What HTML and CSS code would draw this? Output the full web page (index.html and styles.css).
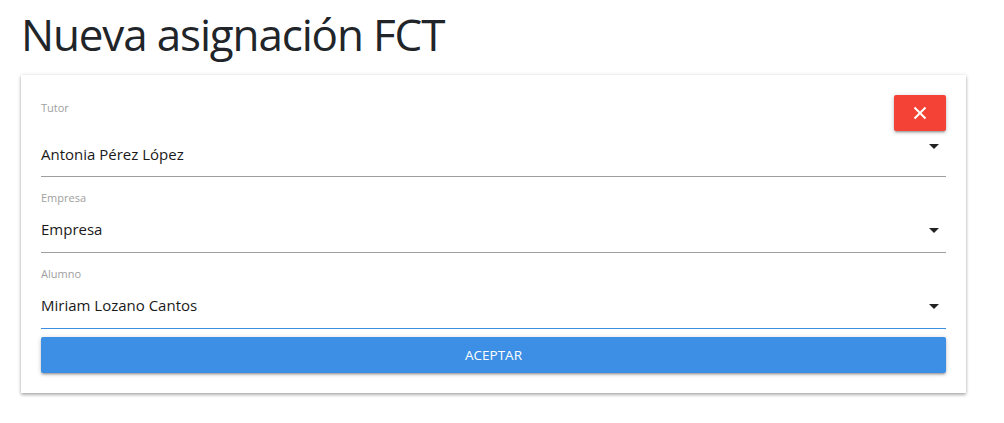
FILE: index.html
```html
<!DOCTYPE html>
<html lang="es">
<head>
<meta charset="utf-8">
<title>Nueva asignación FCT</title>
<link rel="stylesheet" href="styles.css">
</head>
<body>
<main class="page">
  <h1 class="title">Nueva asignación FCT</h1>
  <section class="card">
    <div class="field field-first">
      <div class="field-top">
        <label class="field-label">Tutor</label>
        <button class="btn-close" type="button" aria-label="Cerrar">
          <svg width="14" height="14" viewBox="0 0 14 14"><path d="M1.5 1.5 L12.5 12.5 M12.5 1.5 L1.5 12.5" stroke="#fff" stroke-width="2" fill="none"/></svg>
        </button>
      </div>
      <div class="field-value">
        <span class="value-text">Antonia Pérez López</span>
        <span class="caret caret-high"></span>
      </div>
    </div>
    <div class="field">
      <label class="field-label">Empresa</label>
      <div class="field-value">
        <span class="value-text">Empresa</span>
        <span class="caret"></span>
      </div>
    </div>
    <div class="field field-active">
      <label class="field-label">Alumno</label>
      <div class="field-value">
        <span class="value-text">Miriam Lozano Cantos</span>
        <span class="caret"></span>
      </div>
    </div>
    <button class="btn-accept" type="button">ACEPTAR</button>
  </section>
</main>
</body>
</html>
```
FILE: styles.css
```css
* { box-sizing: border-box; }
html, body { margin: 0; padding: 0; background: #fff; }
body {
  font-family: "Open Sans", "Noto Sans", "DejaVu Sans", sans-serif;
  color: #212121;
}
.page {
  padding: 8px 38px 30px 21px;
}
.title {
  margin: 0 0 14px 0;
  font-size: 44px;
  line-height: 53px;
  font-weight: 400;
  color: #212529;
  letter-spacing: -1.15px;
}
.card {
  background: #fff;
  padding: 20px;
  box-shadow: 0 2px 3px 0 rgba(0,0,0,0.28), 0 0 4px 0 rgba(0,0,0,0.12);
  display: flex;
  flex-direction: column;
}
.field {
  padding: 13px 0 11px 0;
  border-bottom: 1px solid #9e9e9e;
}
.field-first {
  padding: 0 0 10px 0;
}
.field-active {
  border-bottom-color: #3d8fe4;
}
.field-top {
  display: flex;
  justify-content: space-between;
  align-items: flex-start;
}
.field-first .field-label {
  margin-top: 5px;
}
.field-label {
  display: block;
  font-size: 11px;
  line-height: 16px;
  color: #a0a0a0;
}
.field-value {
  margin-top: 11px;
  display: flex;
  justify-content: space-between;
  align-items: flex-start;
  height: 24px;
}
.value-text {
  font-size: 15px;
  line-height: 24px;
  color: #1a1a1a;
}
.caret {
  width: 0;
  height: 0;
  margin: 11px 7px 0 0;
  border-left: 5px solid transparent;
  border-right: 5px solid transparent;
  border-top: 5px solid #222;
}
.caret-high {
  margin-top: 2px;
}
.btn-close {
  width: 52px;
  height: 36px;
  border: none;
  border-radius: 2px;
  background: #f44336;
  display: flex;
  align-items: center;
  justify-content: center;
  padding: 0;
  box-shadow: 0 2px 2px 0 rgba(0,0,0,0.14), 0 3px 1px -2px rgba(0,0,0,0.12), 0 1px 5px 0 rgba(0,0,0,0.2);
  cursor: pointer;
}
.btn-accept {
  margin-top: 8px;
  height: 36px;
  border: none;
  border-radius: 2px;
  background: #3c8fe4;
  color: #fff;
  font-family: "Open Sans", "Noto Sans", sans-serif;
  font-size: 13.5px;
  letter-spacing: 0;
  box-shadow: 0 2px 2px 0 rgba(0,0,0,0.14), 0 3px 1px -2px rgba(0,0,0,0.12), 0 1px 5px 0 rgba(0,0,0,0.2);
  cursor: pointer;
}
```
